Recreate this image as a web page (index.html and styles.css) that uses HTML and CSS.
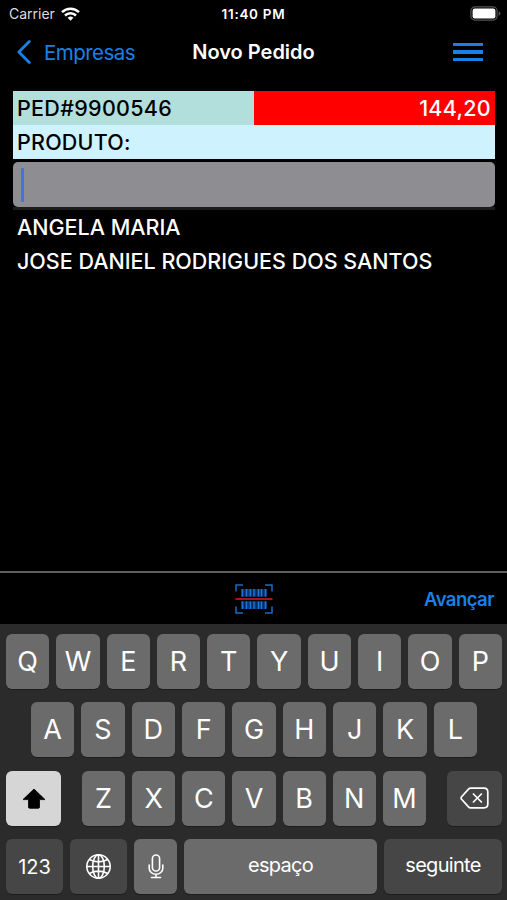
FILE: index.html
```html
<!DOCTYPE html>
<html lang="pt-BR">
<head>
  <meta charset="UTF-8">
  <meta name="viewport" content="width=device-width, initial-scale=1.0">
  <title>Novo Pedido</title>
  <link rel="stylesheet" href="styles.css">
</head>
<body>
  <div class="main">
    <div class="status-bar">
      <div class="carrier">
        <span class="carrier-name">Carrier</span>
        <svg class="wifi" width="19" height="14" viewBox="0 0 19 14" fill="none" stroke="#fff" stroke-width="2.5">
          <path d="M1 5.1a12.2 12.2 0 0 1 17 0" />
          <path d="M4 8.5a7.8 7.8 0 0 1 11 0" />
          <path d="M9.500 13.800l-2.900-3a4.200 4.200 0 0 1 5.800 0z" fill="#fff" stroke="none" />
        </svg>
      </div>
      <span class="time">11:40 PM</span>
      <svg class="battery" width="31" height="15" viewBox="0 0 31 15">
        <rect x="0.9" y="0.9" width="26.2" height="13.2" rx="4" fill="none" stroke="#555" stroke-width="1.2" />
        <rect x="2.6" y="2.6" width="22.8" height="9.8" rx="2.2" fill="#fff" />
        <path d="M28.6 5.2c2.4.8 2.4 3.8 0 4.6z" fill="#555" />
      </svg>
    </div>

    <div class="nav-bar">
      <div class="back">
        <svg width="14" height="24" viewBox="0 0 14 24" fill="none" stroke="#1a80e6" stroke-width="2.8" stroke-linecap="round" stroke-linejoin="round">
          <path d="M12.3 1.6L1.900 12l10.400 10.400" />
        </svg>
        <span class="back-text">Empresas</span>
      </div>
      <span class="title">Novo Pedido</span>
      <div class="menu">
        <span class="line"></span>
        <span class="line"></span>
        <span class="line"></span>
      </div>
    </div>

    <div class="order">
      <div class="order-top">
        <div class="order-number"><span class="order-id">PED#9900546</span></div>
        <div class="order-total"><span class="total">144,20</span></div>
      </div>
      <div class="product"><span class="product-label">PRODUTO:</span></div>
      <div class="search">
        <div class="input"><span class="cursor"></span></div>
      </div>
      <div class="name"><span class="name-one">ANGELA MARIA</span></div>
      <div class="name"><span class="name-two">JOSE DANIEL RODRIGUES DOS SANTOS</span></div>
    </div>

    <div class="toolbar">
      <svg class="barcode" width="38" height="30" viewBox="0 0 38 30">
        <path d="M1 7.5V1h7M30 1h7v6.5M37 22.5V29h-7M8 29H1v-6.5" fill="none" stroke="#1a6cc8" stroke-width="1.5" />
        <path d="M6 5h26v20H6z" fill="#063a7c" />
        <path d="M7.5 5v20M11.5 5v20M15.5 5v20M19 5v20M23.5 5v20M26.5 5v20M30.5 5v20" stroke="#1b74da" stroke-width="1.3" />
        <path d="M9.5 5v20M17.3 5v20M21.5 5v20M28.5 5v20" stroke="#032450" stroke-width="0.9" />
        <path d="M4 12.7h30v4.6H4z" fill="#000" />
        <path d="M0.5 14h37v2h-37z" fill="#a81515" />
      </svg>
      <span class="next">Avançar</span>
    </div>

    <div class="keyboard">
      <div class="row">
        <div class="key">Q</div>
        <div class="key">W</div>
        <div class="key">E</div>
        <div class="key">R</div>
        <div class="key">T</div>
        <div class="key">Y</div>
        <div class="key">U</div>
        <div class="key">I</div>
        <div class="key">O</div>
        <div class="key">P</div>
      </div>
      <div class="row row-middle">
        <div class="key">A</div>
        <div class="key">S</div>
        <div class="key">D</div>
        <div class="key">F</div>
        <div class="key">G</div>
        <div class="key">H</div>
        <div class="key">J</div>
        <div class="key">K</div>
        <div class="key">L</div>
      </div>
      <div class="row row-shift">
        <div class="key shift">
          <svg width="24" height="21" viewBox="0 0 24 21">
            <path d="M12 1L23 11.6H17.5V19q0 1.3-1.3 1.3H7.800Q6.500 20.300 6.500 19V11.600H1z" fill="#000" stroke="#000" stroke-width="0.8" stroke-linejoin="round" />
          </svg>
        </div>
        <div class="letters">
          <div class="key">Z</div>
          <div class="key">X</div>
          <div class="key">C</div>
          <div class="key">V</div>
          <div class="key">B</div>
          <div class="key">N</div>
          <div class="key">M</div>
        </div>
        <div class="key dark delete">
          <svg width="29" height="22" viewBox="0 0 29 22" fill="none" stroke="#fff" stroke-width="1.7" stroke-linecap="round" stroke-linejoin="round">
            <path d="M10.5 1.2H24q3.8 0 3.8 3.8v12q0 3.8-3.8 3.8H10.5q-1.2 0-2-.9L1.6 12.3q-1.1-1.300 0-2.600L8.500 2.100q.8-.9 2-.9z" />
            <path d="M13.400 7l8 8M21.400 7l-8 8" />
          </svg>
        </div>
      </div>
      <div class="row row-bottom">
        <div class="key dark numbers"><span class="numbers-text">123</span></div>
        <div class="key dark globe">
          <svg width="27" height="27" viewBox="0 0 27 27" fill="none" stroke="#fff" stroke-width="1.6">
            <circle cx="13.5" cy="13.5" r="11.7" />
            <ellipse cx="13.5" cy="13.5" rx="5.8" ry="11.7" />
            <path d="M13.5 1.8v23.4M1.8 13.5h23.4M4.3 6.5q9.2 4.8 18.4 0M4.3 20.5q9.2-4.8 18.4 0" />
          </svg>
        </div>
        <div class="key mic">
          <svg width="16" height="25" viewBox="0 0 16 25" fill="none" stroke="#fff" stroke-width="1.6" stroke-linecap="round">
            <rect x="4.4" y="1" width="7.2" height="16" rx="3.6" />
            <path d="M1.2 11v3.2a6.8 6.1 0 0 0 13.6 0V11M8 20.3V23.500M3.500 23.500h9" />
          </svg>
        </div>
        <div class="key space"><span class="space-text">espaço</span></div>
        <div class="key dark return"><span class="return-text">seguinte</span></div>
      </div>
    </div>
  </div>
</body>
</html>
```
FILE: styles.css
```css
* {
  box-sizing: border-box;
  font-family: "Inter", sans-serif;
}
body {
  margin: 0;
  background-color: black;
}
.main {
  display: flex;
  flex-direction: column;
  width: 507px;
  height: 900px;
  overflow: hidden;
  background-color: black;
  color: white;
}
span {
  white-space: nowrap;
}
svg {
  display: block;
}
.status-bar {
  display: grid;
  grid-template-columns: 1fr auto 1fr;
  align-items: center;
  height: 27px;
  padding: 0 9px;
}
.carrier {
  display: flex;
  align-items: center;
  gap: 6px;
}
.carrier-name {
  font-size: 14px;
  color: #ddd;
}
.time {
  font-size: 13.5px;
  font-weight: 600;
  letter-spacing: 0.7px;
}
.battery {
  justify-self: end;
  margin-right: -3px;
}
.nav-bar {
  display: grid;
  grid-template-columns: 1fr auto 1fr;
  align-items: center;
  height: 50px;
  padding: 0 24px;
}
.back {
  display: flex;
  align-items: center;
  gap: 12px;
  margin-left: -7px;
}
.back-text {
  padding-left: 1px;
  font-size: 20.5px;
  letter-spacing: -0.55px;
  color: #1a80e6;
}
.title {
  font-size: 20px;
  font-weight: 600;
}
.menu {
  display: flex;
  flex-direction: column;
  justify-self: end;
  gap: 4px;
  width: 30px;
}
.line {
  height: 3.4px;
  background-color: #1a80e6;
}
.order {
  flex: 1;
  padding: 14px 12px 0 13px;
  font-size: 21.5px;
  font-weight: 500;
}
.order-top {
  display: flex;
}
.order-number,
.order-total,
.product,
.name {
  display: flex;
  align-items: center;
  height: 34px;
  padding: 0 4px;
}
.order-number {
  width: 241px;
  background-color: #b2dfdb;
  color: black;
}
.order-id {
  letter-spacing: 0.3px;
}
.order-total {
  flex: 1;
  justify-content: flex-end;
  background-color: red;
}
.total {
  letter-spacing: 0.3px;
}
.product {
  background-color: #cff2ff;
  color: black;
}
.product-label {
  letter-spacing: 0.2px;
}
.search {
  height: 51px;
  padding-top: 3px;
  border-bottom: 3px solid #1c1c1e;
}
.input {
  display: flex;
  align-items: center;
  height: 45px;
  padding-left: 8px;
  border-radius: 5px;
  background-color: #8e8d92;
}
.cursor {
  width: 3px;
  height: 34px;
  border-radius: 1px;
  background-color: #4b6ee0;
}
.toolbar {
  display: grid;
  grid-template-columns: 1fr auto 1fr;
  align-items: center;
  height: 53px;
  padding: 0 13px;
  border-top: 2px solid #606060;
}
.barcode {
  grid-column: 2;
}
.next {
  justify-self: end;
  font-size: 18.5px;
  font-weight: 600;
  letter-spacing: -0.55px;
  color: #1a80e6;
}
.keyboard {
  display: flex;
  flex-direction: column;
  gap: 13.5px;
  height: 276px;
  padding: 9.5px 5px 0 6px;
  background-color: #2b2b2b;
}
.row {
  display: flex;
  gap: 7px;
  height: 55px;
}
.key {
  display: flex;
  flex: 1;
  align-items: center;
  justify-content: center;
  border-radius: 6px;
  background-color: #6b6b6b;
  box-shadow: 0 1px 0 #1d1d1d;
  font-size: 27px;
}
.row-middle {
  padding: 0 25px;
}
.row-shift {
  justify-content: space-between;
}
.letters {
  display: flex;
  gap: 7px;
  width: 344px;
}
.shift,
.delete {
  flex: none;
  width: 55px;
}
.shift {
  background-color: #d6d6d6;
}
.dark {
  background-color: #464646;
}
.numbers,
.globe {
  flex: none;
  width: 57px;
}
.mic {
  flex: none;
  width: 43px;
}
.return {
  flex: none;
  width: 118px;
}
.numbers-text {
  font-size: 20px;
}
.space-text,
.return-text {
  padding-bottom: 3px;
  font-size: 20px;
  letter-spacing: -0.7px;
}
```
